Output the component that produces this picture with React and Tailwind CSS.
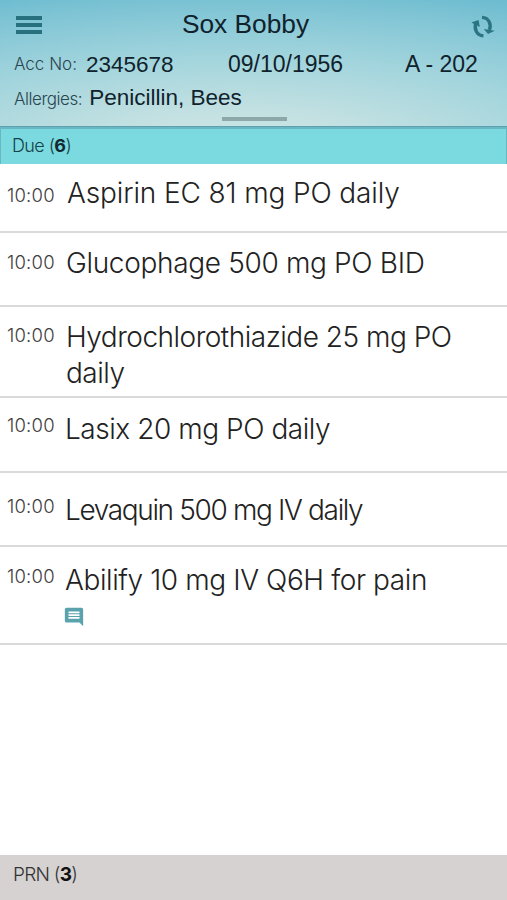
import { MdComment } from "react-icons/md";

const meds = [
  { name: "Aspirin EC 81 mg PO daily", time: "10:00", row: "h-[69px]", timePad: "pt-[18px]", namePad: "pt-[11px] pl-[67px]", spacing: "tracking-[-0.12px]" },
  { name: "Glucophage 500 mg PO BID", time: "10:00", row: "h-[74px]", timePad: "pt-[16px]", namePad: "pt-[12px] pl-[66px]", spacing: "tracking-[-0.33px]" },
  { name: "Hydrochlorothiazide 25 mg PO daily", time: "10:00", row: "h-[91px]", timePad: "pt-[15px]", namePad: "pt-[12px] pl-[66px]", spacing: "tracking-[-0.5px]" },
  { name: "Lasix 20 mg PO daily", time: "10:00", row: "h-[75px]", timePad: "pt-[14px]", namePad: "pt-[13px] pl-[65px]", spacing: "tracking-[-0.45px]" },
  { name: "Levaquin 500 mg IV daily", time: "10:00", row: "h-[74px]", timePad: "pt-[20px]", namePad: "pt-[19px] pl-[65px]", spacing: "tracking-[-1.35px]" },
  { name: "Abilify 10 mg IV Q6H for pain", time: "10:00", row: "h-[98px]", timePad: "pt-[16px]", namePad: "pt-[15px] pl-[65px]", spacing: "tracking-[-0.4px]", note: true },
];

function RefreshIcon() {
  return (
    <svg width="24" height="24" viewBox="0 0 24 24" fill="none" stroke="#2b7484" strokeWidth="3.4">
      <path d="M11 2.400 C17.500 2.600 20.800 9 18.300 15" />
      <path d="M12.400 20.800 C6 20.600 2.800 14.500 4.900 8" />
      <path d="M12.800 14 L23.800 15.800 L17 19 Z" fill="#2b7484" stroke="none" />
      <path d="M0.300 7.600 L7.600 5 L8.800 12 Z" fill="#2b7484" stroke="none" />
    </svg>
  );
}

function Header() {
  return (
    <header className="h-[127px] bg-[radial-gradient(ellipse_120%_130%_at_47%_118%,#cfe6e5_0%,#c4e1e2_22%,#a3d5dd_55%,#85c7d6_82%,#6dbcd0_100%)] text-[#10222c] border-b border-[#5f9fb2]">
      <div className="flex h-[47px] items-start justify-between pl-[16px] pr-[12px]">
        <button className="mt-[16px] flex w-[26px] flex-col gap-[3px]" aria-label="Menu">
          <span className="h-[4px] bg-[#27717f]" />
          <span className="h-[4px] bg-[#27717f]" />
          <span className="h-[4px] bg-[#27717f]" />
        </button>
        <h1 className="mt-[8px] mr-[22px] text-[26.300px] leading-[32px]">Sox Bobby</h1>
        <button className="mt-[15px]" aria-label="Refresh">
          <RefreshIcon />
        </button>
      </div>
      <div className="flex h-[36px] items-baseline pl-[14px]">
        <div className="w-[214px] whitespace-nowrap leading-[36px]">
          <span className="inline-block -translate-y-[2px] font-['Inter'] text-[17px] font-light text-[#2a4650]">Acc No:</span>
          <span className="ml-[9px] text-[22.500px]">2345678</span>
        </div>
        <span className="w-[177px] text-[23px]">09/10/1956</span>
        <span className="text-[23px]">A - 202</span>
      </div>
      <div className="flex h-[33px] items-baseline pl-[14px] leading-[30px]">
        <span className="font-['Inter'] text-[17px] font-light tracking-[-0.45px] text-[#2a4650]">Allergies:</span>
        <span className="ml-[7px] text-[22.500px]">Penicillin, Bees</span>
      </div>
      <div className="mx-auto mt-[1px] h-[4px] w-[65px] translate-x-[1px] bg-[#8ea7a9]" />
    </header>
  );
}

function MedRow({ med }) {
  return (
    <li className={`flex border-b-2 border-[#dadada] ${med.row}`}>
      <span className={`w-0 shrink-0 whitespace-nowrap font-light ${med.timePad}`}>
        <span className="ml-[7px] text-[18.500px] leading-[26px] tracking-[0.2px] text-[#404040]">{med.time}</span>
      </span>
      <div className={`font-light text-[#222] ${med.namePad}`}>
        <p className={`max-w-[400px] text-[28px] leading-[36px] ${med.spacing}`}>{med.name}</p>
        {med.note && <MdComment className="mt-[8px] size-[22px] -ml-[2px] text-[#5aa3ad]" />}
      </div>
    </li>
  );
}

export default function App() {
  return (
    <div className="flex h-[900px] w-[507px] flex-col overflow-hidden bg-white font-['Liberation_Sans',sans-serif]">
      <Header />
      <div className="h-[37px] bg-[#7adadf] border-t-2 border-x border-[#68b8c2] pl-[11px] font-['Inter',sans-serif] text-[18px] font-light leading-[33px] tracking-[-0.6px] text-[#174048]">
        Due (<b className="font-bold text-[#10282e]">6</b>)
      </div>
      <ul className="flex-1 font-['Inter',sans-serif]">
        {meds.map((med) => (
          <MedRow key={med.name} med={med} />
        ))}
      </ul>
      <footer className="h-[45px] bg-[#d6d2d1] pl-[13px] font-['Inter',sans-serif] text-[19px] font-light leading-[39px] tracking-[-0.75px] text-[#333]">
        PRN (<b className="font-bold text-[#111]">3</b>)
      </footer>
    </div>
  );
}
